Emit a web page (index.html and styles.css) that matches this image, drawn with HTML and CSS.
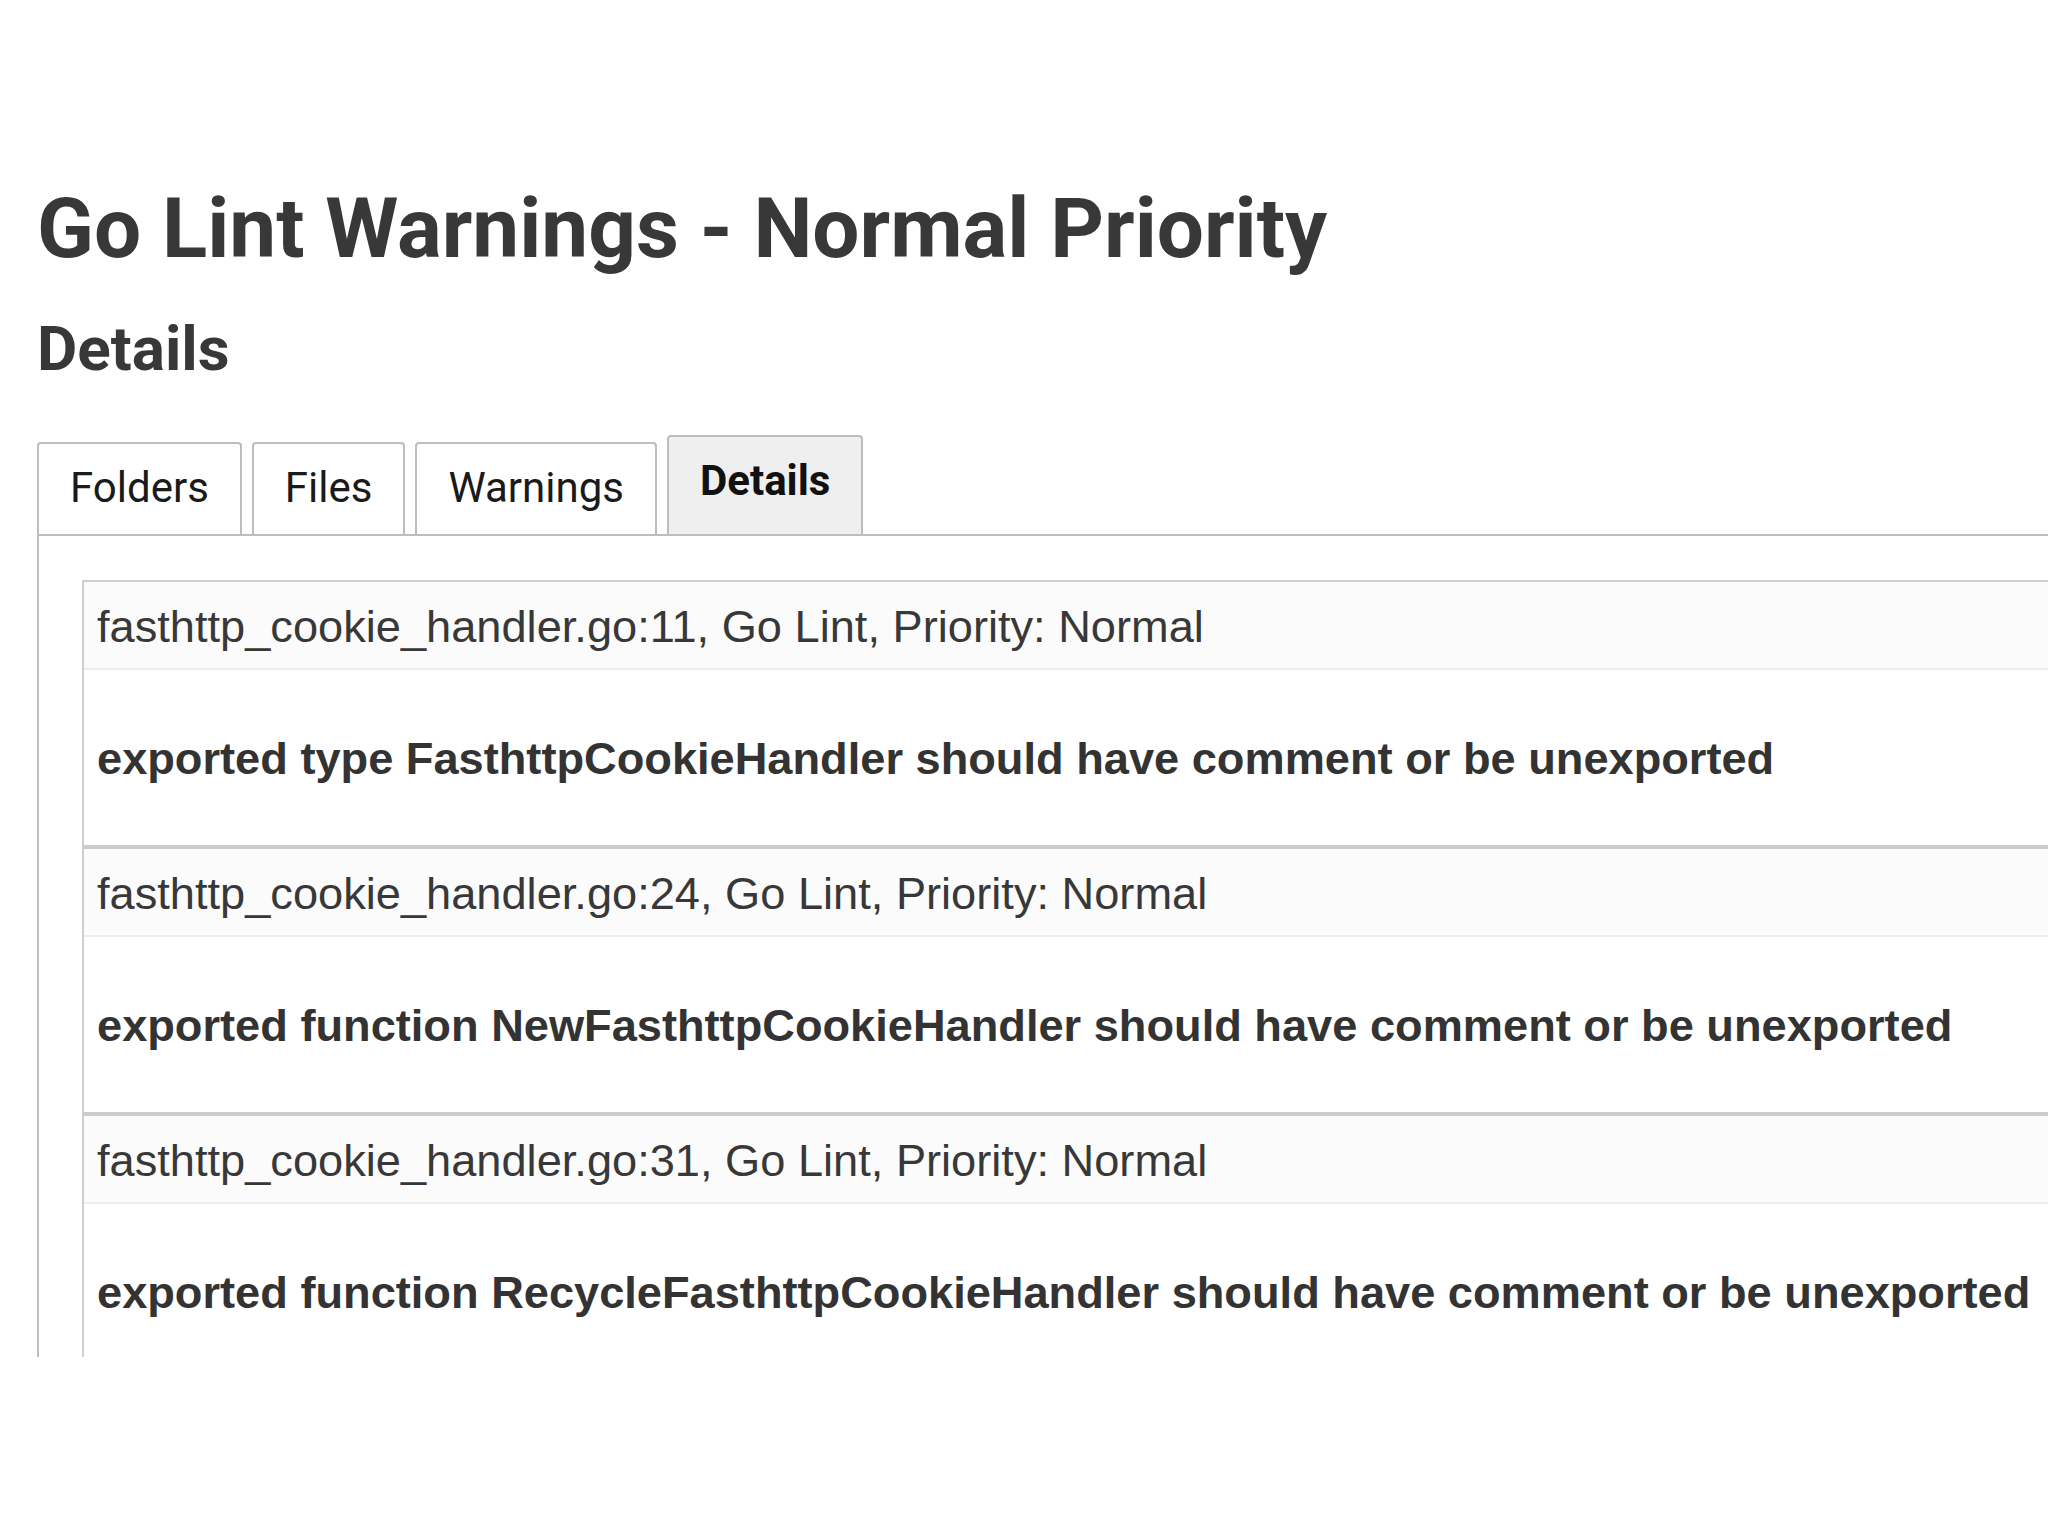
FILE: index.html
```html
<!DOCTYPE html>
<html lang="en">
<head>
<meta charset="utf-8">
<title>Go Lint Warnings - Normal Priority</title>
<link rel="stylesheet" href="styles.css">
</head>
<body>
<div class="page">
  <h1 class="title">Go Lint Warnings - Normal Priority</h1>
  <h2 class="subtitle">Details</h2>
  <div class="tabs">
    <div class="tab">Folders</div>
    <div class="tab">Files</div>
    <div class="tab">Warnings</div>
    <div class="tab tab-active">Details</div>
  </div>
  <div class="panel">
    <div class="warnings">
      <div class="warning">
        <div class="loc">fasthttp_cookie_handler.go:11, Go Lint, Priority: Normal</div>
        <div class="msg">exported type FasthttpCookieHandler should have comment or be unexported</div>
      </div>
      <div class="warning">
        <div class="loc">fasthttp_cookie_handler.go:24, Go Lint, Priority: Normal</div>
        <div class="msg">exported function NewFasthttpCookieHandler should have comment or be unexported</div>
      </div>
      <div class="warning">
        <div class="loc">fasthttp_cookie_handler.go:31, Go Lint, Priority: Normal</div>
        <div class="msg">exported function RecycleFasthttpCookieHandler should have comment or be unexported</div>
      </div>
    </div>
  </div>
</div>
</body>
</html>
```

FILE: styles.css
```css
html, body {
  margin: 0;
  padding: 0;
  background: #ffffff;
}
body {
  overflow: hidden;
  width: 2048px;
  height: 1536px;
}
.page {
  padding-left: 37px;
  width: 2200px;
}
.title {
  margin: 178px 0 0 0;
  font-family: Roboto, "Liberation Sans", sans-serif;
  font-weight: 700;
  font-size: 83.6px;
  line-height: 100px;
  color: #383838;
}
.subtitle {
  margin: 34px 0 0 0;
  font-family: Roboto, "Liberation Sans", sans-serif;
  font-weight: 700;
  font-size: 62px;
  line-height: 74px;
  color: #383838;
}
.tabs {
  display: flex;
  align-items: flex-end;
  gap: 10px;
  margin-top: 49px;
}
.tab {
  font-family: Roboto, "Liberation Sans", sans-serif;
  font-size: 42px;
  line-height: 49px;
  color: #1a1a1a;
  border: 2px solid #bdbdbd;
  border-bottom: none;
  border-radius: 4px 4px 0 0;
  padding: 19px 31px 22px 31px;
  background: #ffffff;
}
.tab-active {
  font-weight: 700;
  background: #efefef;
  padding-bottom: 29px;
  color: #111111;
}
.panel {
  box-sizing: border-box;
  height: 823px;
  overflow: hidden;
  border-top: 2px solid #bdbdbd;
  border-left: 2px solid #bdbdbd;
  padding: 44px 0 0 43px;
}
.warnings {
  border-top: 2px solid #cfcfcf;
}
.warning {
  border-left: 2px solid #cfcfcf;
  border-bottom: 4px solid #cccccc;
}
.loc {
  font-family: "Liberation Sans", Arial, sans-serif;
  font-size: 45.2px;
  line-height: 54px;
  color: #383838;
  background: #fbfbfb;
  padding: 18px 13px 14px 13px;
  border-bottom: 2px solid #ededed;
}
.msg {
  font-family: "Liberation Sans", Arial, sans-serif;
  font-weight: 700;
  font-size: 45.2px;
  line-height: 54px;
  color: #333333;
  padding: 62px 13px 59px 13px;
  background: #ffffff;
}
```
